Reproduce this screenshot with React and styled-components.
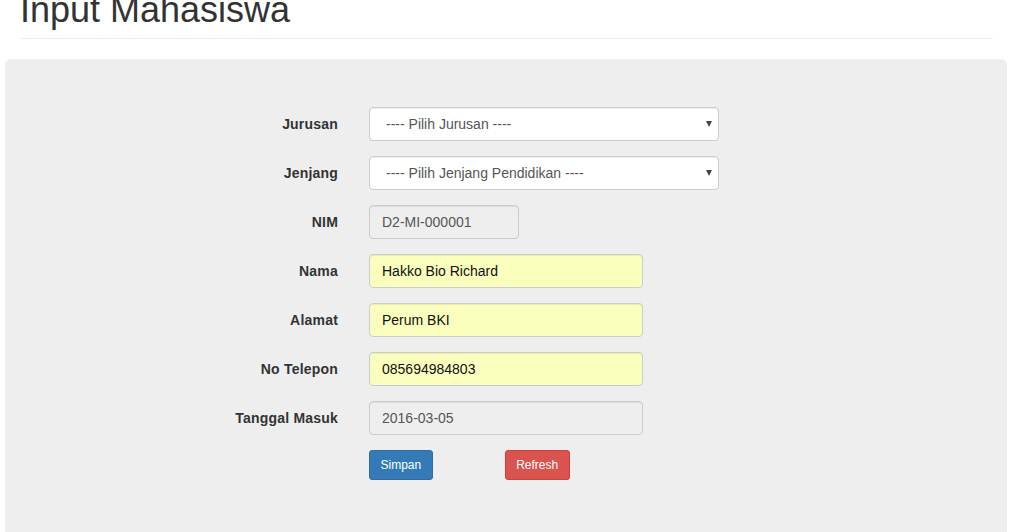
import React from 'react';
import styled, { createGlobalStyle } from 'styled-components';

const GlobalStyle = createGlobalStyle`
  html, body {
    margin: 0;
    padding: 0;
    background: #fff;
    overflow: hidden;
  }
  body {
    font-family: "Liberation Sans", Arial, Helvetica, sans-serif;
    font-size: 14px;
    line-height: 20px;
    color: #333;
  }
`;

const fields = [
  { label: 'Jurusan', kind: 'select', value: '---- Pilih Jurusan ----' },
  { label: 'Jenjang', kind: 'select', value: '---- Pilih Jenjang Pendidikan ----' },
  { label: 'NIM', kind: 'disabled', value: 'D2-MI-000001', width: 150 },
  { label: 'Nama', kind: 'filled', value: 'Hakko Bio Richard', width: 274 },
  { label: 'Alamat', kind: 'filled', value: 'Perum BKI', width: 274 },
  { label: 'No Telepon', kind: 'filled', value: '085694984803', width: 274 },
  { label: 'Tanggal Masuk', kind: 'disabled', value: '2016-03-05', width: 274 },
];

const App = () => {
  return (
    <>
      <GlobalStyle />
      <PageHeader>
        <Title>Input Mahasiswa</Title>
      </PageHeader>

      {/* Form panel */}
      <Well>
        <Form onSubmit={e => e.preventDefault()}>
          {fields.map(f => (
            <React.Fragment key={f.label}>
              <Label>{f.label}</Label>
              {f.kind === 'select'
              ?
                <SelectBox>
                  <span>{f.value}</span>
                  <Caret />
                </SelectBox>
              :
                <Input
                  type="text"
                  readOnly
                  value={f.value}
                  $width={f.width}
                  $kind={f.kind}
                />
              }
            </React.Fragment>
          ))}
          <span></span>
          <ButtonRow>
            <Button type="submit" $variant="primary">Simpan</Button>
            <Button type="button" $variant="danger">Refresh</Button>
          </ButtonRow>
        </Form>
      </Well>
    </>
  );
};

//Component Styles
const PageHeader = styled.div`
  margin: 0 20px;
  padding-bottom: 8px;
  border-bottom: 1px solid #eee;
`;

const Title = styled.h1`
  margin: -10px 0 0 0;
  font-size: 36px;
  font-weight: 500;
  line-height: 40px;
  color: #333;
`;

const Well = styled.div`
  margin: 20px 6px 0 5px;
  padding: 48px 0 80px;
  min-height: 480px;
  background: #eee;
  border-radius: 6px;
  box-sizing: border-box;
`;

const Form = styled.form`
  display: grid;
  grid-template-columns: 333px 1fr;
  column-gap: 31px;
  row-gap: 15px;
  align-items: center;
`;

const Label = styled.label`
  text-align: right;
  font-weight: bold;
  font-size: 14px;
  letter-spacing: 0.2px;
  color: #333;
`;

const Input = styled.input`
  box-sizing: border-box;
  width: ${p => p.$width}px;
  height: 34px;
  padding: 6px 12px;
  font-family: inherit;
  font-size: 14px;
  line-height: 20px;
  border: 1px solid #ccc;
  border-radius: 4px;
  box-shadow: inset 0 1px 1px rgba(0, 0, 0, .075);
  outline: none;
  color: ${p => (p.$kind === 'filled' ? '#111' : '#555')};
  background: ${p => (p.$kind === 'filled' ? '#faffbd' : '#eee')};
`;

const SelectBox = styled.div`
  box-sizing: border-box;
  width: 350px;
  height: 34px;
  display: flex;
  align-items: center;
  justify-content: space-between;
  padding: 0 6px 0 16px;
  background: #fff;
  border: 1px solid #ccc;
  border-radius: 4px;
  box-shadow: inset 0 1px 1px rgba(0, 0, 0, .075);
  color: #555;
  font-size: 14px;
`;

const Caret = styled.span`
  width: 0;
  height: 0;
  border-left: 3.5px solid transparent;
  border-right: 3.5px solid transparent;
  border-top: 6px solid #444;
`;

const ButtonRow = styled.div`
  display: flex;
  gap: 72px;
`;

const Button = styled.button`
  height: 30px;
  padding: 5px 10.5px;
  font-family: inherit;
  font-size: 12px;
  line-height: 18px;
  color: #fff;
  border-radius: 3px;
  cursor: pointer;
  background: ${p => (p.$variant === 'primary' ? '#337ab7' : '#d9534f')};
  border: 1px solid ${p => (p.$variant === 'primary' ? '#2e6da4' : '#d43f3a')};
`;

export default App;
